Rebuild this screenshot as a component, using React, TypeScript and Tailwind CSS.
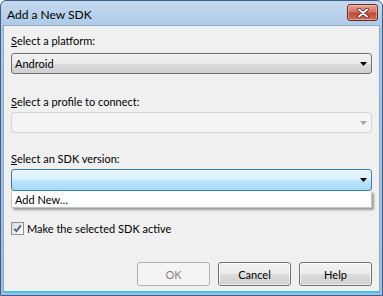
import React from 'react';

const font = { fontFamily: 'Lato, "Noto Sans", Arial, sans-serif' };

function Arrow({ disabled }: { disabled?: boolean }) {
  return (
    <svg width="7" height="4" viewBox="0 0 7 4" className="shrink-0">
      <path d="M0 0h7L3.5 4z" fill={disabled ? '#a5a5a5' : '#000'} />
    </svg>
  );
}

function Button({ label, disabled }: { label: string; disabled?: boolean }) {
  return disabled ? (
    <div className="w-[73px] h-[24px] flex items-center justify-center rounded-[3px] border border-[#adb2b5] bg-[#f4f4f4] text-[#838383]">
      {label}
    </div>
  ) : (
    <div className="w-[73px] h-[24px] flex items-center justify-center rounded-[3px] border border-[#707070] bg-[linear-gradient(#f2f2f2_0%,#ebebeb_50%,#dddddd_50%,#cfcfcf_100%)] text-black shadow-[inset_0_0_0_1px_rgba(255,255,255,0.7)]">
      {label}
    </div>
  );
}

export default function App() {
  return (
    <div
      className="w-[383px] h-[296px] flex flex-col rounded-t-[6px] border border-[#3d5f85] bg-[linear-gradient(#c4d9ef,#a9c6e6_30px,#9fc0e3)] text-[11px] leading-[15px]"
      style={font}
    >
      {/* Title bar */}
      <div className="h-[24px] flex items-start justify-between pl-[6px] pr-[4px]">
        <span className="mt-[6px] text-[12px] text-black">Add a New SDK</span>
        <div className="mt-[3px] w-[31px] h-[17px] flex items-center justify-center rounded-[3px] border border-[#6b2a24] bg-[linear-gradient(#e8a493_0%,#d6725f_45%,#c14a33_55%,#d0705a_100%)] shadow-[inset_0_0_0_1px_rgba(255,255,255,0.35)]">
          <svg width="12" height="10" viewBox="0 0 12 10">
            <path d="M2 1.5l8 7M10 1.5l-8 7" stroke="#3a1a16" strokeWidth="3.4" strokeLinecap="round" />
            <path d="M2 1.5l8 7M10 1.5l-8 7" stroke="#fff" strokeWidth="2" strokeLinecap="round" />
          </svg>
        </div>
      </div>

      {/* Client area */}
      <div className="flex-1 mx-[2px] mb-[2px] border border-[#8ea9c7] border-b-[#45c2e6] border-b-2 bg-[#f0f0f0] px-[7px] pt-[7px] text-black flex flex-col">
        <span>
          <u>S</u>elect a platform:
        </span>
        <div className="mt-[5px] h-[21px] w-[361px] flex items-center justify-between pl-[3px] pr-[4px] rounded-[3px] border border-[#707070] bg-[linear-gradient(#f2f2f2_0%,#ebebeb_50%,#dddddd_50%,#cfcfcf_100%)]">
          <span>Android</span>
          <Arrow />
        </div>

        <span className="mt-[20px]">
          <u>S</u>elect a profile to connect:
        </span>
        <div className="mt-[3px] h-[21px] w-[361px] flex items-center justify-end pr-[4px] rounded-[3px] border border-[#d5d5d5] bg-[#f4f4f4]">
          <Arrow disabled />
        </div>

        <span className="mt-[18px]">
          <u>S</u>elect an SDK version:
        </span>
        <div className="relative mt-[3px] w-[361px]">
          <div className="h-[22px] flex items-center justify-end pr-[4px] rounded-[3px] border border-[#3c7fb1] bg-[linear-gradient(#eaf6fd_0%,#d9f0fc_50%,#bee6fd_50%,#a7d9f5_100%)]">
            <Arrow />
          </div>
          <div className="absolute left-0 top-[22px] w-[361px] h-[17px] flex items-center pl-[3px] bg-white border border-t-0 border-[#c6c6c6] shadow-[2px_2px_2px_rgba(0,0,0,0.35)]">
            Add New…
          </div>
        </div>

        <div className="mt-[30px] flex items-center gap-[3px]">
          <div className="w-[13px] h-[13px] border border-[#8e8f8f] bg-[linear-gradient(135deg,#dcdcdc,#fcfcfc)] flex items-center justify-center">
            <svg width="9" height="9" viewBox="0 0 9 9">
              <path d="M1.2 4.8l2.3 2.4L7.8 1.4" stroke="#4a5f97" strokeWidth="1.8" fill="none" />
            </svg>
          </div>
          <span>Make the selected SDK active</span>
        </div>

        <div className="mt-auto mb-[5px] flex justify-end gap-[8px]">
          <Button label="OK" disabled />
          <Button label="Cancel" />
          <Button label="Help" />
        </div>
      </div>
    </div>
  );
}
